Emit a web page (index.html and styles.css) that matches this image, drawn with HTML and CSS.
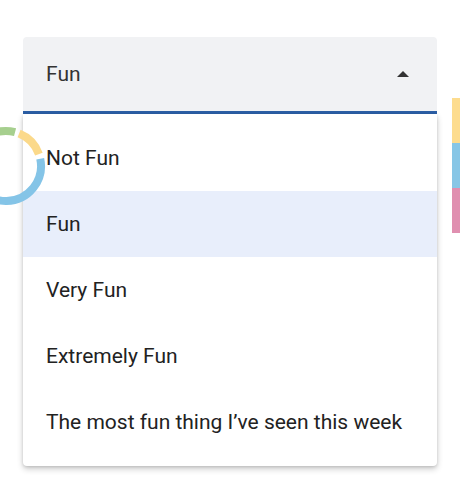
FILE: index.html
```html
<!DOCTYPE html>
<html lang="en">
<head>
  <meta charset="UTF-8" />
  <title>Fun select</title>
  <link rel="stylesheet" href="styles.css">
</head>
<body>
  <div class="stage">
    <!-- chart bits peeking out behind the menu -->
    <svg class="donut" width="90" height="90" viewBox="0 0 90 90">
      <path d="M12.11 33.03 A35 35 0 0 1 54.06 11.19" stroke="#a6cf8e" />
      <path d="M58.11 12.55 A35 35 0 0 1 77.89 33.03" stroke="#fbd98a" />
      <path d="M79.23 37.72 A35 35 0 1 1 10.53 38.92" stroke="#84c4e7" />
    </svg>
    <div class="bars">
      <div class="bar yellow"></div>
      <div class="bar blue"></div>
      <div class="bar pink"></div>
    </div>

    <div class="select">
      <div class="field">
        <span class="value">Fun</span>
        <span class="arrow"></span>
      </div>
      <ul class="menu">
        <li>Not Fun</li>
        <li class="selected">Fun</li>
        <li>Very Fun</li>
        <li>Extremely Fun</li>
        <li>The most fun thing I’ve seen this week</li>
      </ul>
    </div>
  </div>
</body>
</html>
```

FILE: styles.css
```css
body {
  font-family: Roboto, "Liberation Sans", sans-serif;
  background: #fff;
  margin: 0;
  padding: 0;
}
.stage {
  position: relative;
  padding: 37px 23px;
}
.donut {
  position: absolute;
  left: -39px;
  top: 121px;
  z-index: 2;
}
.donut path {
  fill: none;
  stroke-width: 8;
}
.bars {
  position: absolute;
  left: 452px;
  top: 98px;
  width: 8px;
}
.bar {
  height: 45px;
}
.yellow { background: #fddc8e; }
.blue { background: #87c6e6; }
.pink { background: #e08fb0; }

.select {
  position: relative;
  z-index: 1;
}
.field {
  height: 74px;
  background: #f1f2f4;
  border-bottom: 3px solid #2c5fa6;
  border-radius: 4px 4px 0 0;
  display: flex;
  align-items: center;
  justify-content: space-between;
  padding: 0 28px 0 23px;
  font-size: 21px;
  color: #333;
}
.arrow {
  width: 0;
  height: 0;
  border-left: 6px solid transparent;
  border-right: 6px solid transparent;
  border-bottom: 6px solid #333;
}
.menu {
  list-style: none;
  margin: 0;
  padding: 11px 0;
  background: #fff;
  border-radius: 0 0 4px 4px;
  box-shadow: 0 3px 6px rgba(0, 0, 0, 0.2), 0 1px 3px rgba(0, 0, 0, 0.12);
}
.menu li {
  height: 66px;
  display: flex;
  align-items: center;
  padding-left: 23px;
  font-size: 21px;
  color: #222;
}
.menu li.selected {
  background: #e8eefb;
}
```
